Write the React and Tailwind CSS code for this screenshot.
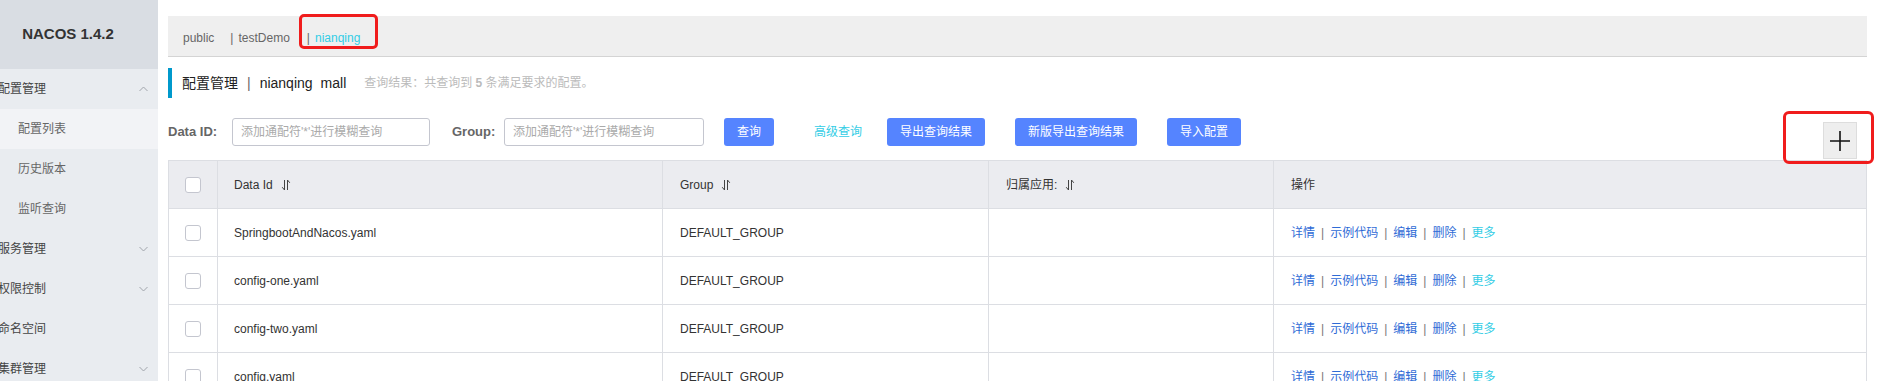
import React from 'react';

const SortIcon = () => (
  <svg width="10" height="12" viewBox="0 0 10 12" fill="none" stroke="#444" strokeWidth="1">
    <path d="M3.5 1v10M1.2 8.2l2.3 2.8" />
    <path d="M6.5 11V1M6.5 1l2.3 2.8" />
  </svg>
);

const Chevron = ({ up }) => (
  <svg width="9" height="6" viewBox="0 0 9 6" fill="none" stroke="#a0a4ab" strokeWidth="1">
    {up ? <path d="M0.5 5l4-4 4 4" /> : <path d="M0.5 1l4 4 4-4" />}
  </svg>
);

const Checkbox = () => <span className="block w-4 h-4 rounded-[3px] border border-[#c4c6cf] bg-white" />;

const menu = [
  { label: '配置管理', level: 0, chevron: 'up' },
  { label: '配置列表', level: 1, active: true },
  { label: '历史版本', level: 1 },
  { label: '监听查询', level: 1 },
  { label: '服务管理', level: 0, chevron: 'down' },
  { label: '权限控制', level: 0, chevron: 'down' },
  { label: '命名空间', level: 0 },
  { label: '集群管理', level: 0, chevron: 'down' },
];

const rows = ['SpringbootAndNacos.yaml', 'config-one.yaml', 'config-two.yaml', 'config.yaml'];

const Ops = () => (
  <div className="flex items-center">
    <a className="text-[#2f6bd6]">详情</a>
    <span className="mx-[6px] text-[#777]">|</span>
    <a className="text-[#2f6bd6]">示例代码</a>
    <span className="mx-[6px] text-[#777]">|</span>
    <a className="text-[#2f6bd6]">编辑</a>
    <span className="mx-[6px] text-[#777]">|</span>
    <a className="text-[#2f6bd6]">删除</a>
    <span className="mx-[6px] text-[#777]">|</span>
    <a className="text-[#33cde5]">更多</a>
  </div>
);

export default function App() {
  return (
    <div className="flex h-[381px] w-full overflow-hidden bg-white text-[12px] text-[#333] font-['Liberation_Sans','Noto_Sans_CJK_SC',sans-serif]">
      {/* sidebar, left 22px cut off in the shot */}
      <aside className="w-[158px] shrink-0 overflow-hidden bg-[#e9ecf0]">
        <div className="w-[180px] -ml-[22px]">
          <div className="h-[69px] bg-[#d9dde3] flex items-center justify-center text-[15px] font-bold text-[#333]">
            NACOS 1.4.2
          </div>
          {menu.map((m) => (
            <div
              key={m.label}
              className={`h-[40px] flex items-center justify-between pr-[10px] ${m.level ? 'pl-[40px] text-[#666]' : 'pl-[20px] text-[#444]'} ${m.active ? 'bg-[#f2f3f6]' : ''}`}
            >
              <span>{m.label}</span>
              {m.chevron && <Chevron up={m.chevron === 'up'} />}
            </div>
          ))}
        </div>
      </aside>

      <main className="flex-1 min-w-0 pl-[10px] pr-[11px] pt-[16px]">
        {/* namespace bar */}
        <div className="h-[41px] bg-[#efefef] border-b border-[#d4d4d4] flex items-center pt-[3px] pl-[15px] text-[#666]">
          <span>public</span>
          <span className="ml-[16px] mr-[5px]">|</span>
          <span>testDemo</span>
          <span className="ml-[17px] mr-[5px]">|</span>
          <span className="relative text-[#33cde5]">
            nianqing
            <span className="absolute -left-[16px] -top-[15px] w-[79px] h-[35px] border-[3px] border-[#f01c1c] rounded-[5px]" />
          </span>
        </div>

        {/* title */}
        <div className="mt-[11px] h-[30px] border-l-4 border-[#0099cc] pl-[10px] flex items-center">
          <span className="text-[14px] text-[#222]">配置管理</span>
          <span className="text-[14px] mx-[9px] text-[#666]">|</span>
          <span className="text-[14px] text-[#222]">nianqing</span>
          <span className="text-[14px] text-[#222] ml-[8px]">mall</span>
          <span className="ml-[18px] text-[#bbb]">
            查询结果：共查询到 <strong className="font-bold">5</strong> 条满足要求的配置。
          </span>
        </div>

        {/* search row */}
        <div className="mt-[20px] flex items-start">
          <label className="w-[64px] h-[28px] flex items-center text-[13px] font-bold text-[#666]">Data ID:</label>
          <input
            className="w-[198px] h-[28px] border border-[#c4c6cf] rounded-[3px] px-[8px] outline-none placeholder:text-[#aaa]"
            placeholder="添加通配符'*'进行模糊查询"
          />
          <label className="ml-[22px] w-[52px] h-[28px] flex items-center text-[13px] font-bold text-[#666]">Group:</label>
          <input
            className="w-[200px] h-[28px] border border-[#c4c6cf] rounded-[3px] px-[8px] outline-none placeholder:text-[#aaa]"
            placeholder="添加通配符'*'进行模糊查询"
          />
          <button className="ml-[20px] h-[28px] px-[13px] rounded-[3px] bg-[#5584ff] text-white">查询</button>
          <button className="ml-[40px] h-[28px] text-[#33cde5]">高级查询</button>
          <button className="ml-[25px] h-[28px] px-[13px] rounded-[3px] bg-[#5584ff] text-white">导出查询结果</button>
          <button className="ml-[30px] h-[28px] px-[13px] rounded-[3px] bg-[#5584ff] text-white">新版导出查询结果</button>
          <button className="ml-[30px] h-[28px] px-[13px] rounded-[3px] bg-[#5584ff] text-white">导入配置</button>
          <div className="relative ml-auto mr-[10px] mt-[4px]">
            <button className="w-[34px] h-[37px] bg-[#eeeeee] border border-[#dddddd] flex items-center justify-center">
              <svg width="20" height="20" viewBox="0 0 20 20" stroke="#111" strokeWidth="1.6">
                <path d="M0 10h20M10 0v20" />
              </svg>
            </button>
            <span className="absolute -left-[40px] -top-[11px] w-[91px] h-[53px] border-[3px] border-[#f01c1c] rounded-[6px]" />
          </div>
        </div>

        {/* table */}
        <div className="mt-[1px] border border-[#dcdee3]">
          <div className="grid grid-cols-[49px_445px_326px_285px_1fr] h-[48px] bg-[#ebecf0] border-b border-[#dcdee3]">
            <div className="border-r border-[#dcdee3] flex items-center justify-center"><Checkbox /></div>
            <div className="border-r border-[#dcdee3] flex items-center gap-[8px] pl-[16px]">Data Id <SortIcon /></div>
            <div className="border-r border-[#dcdee3] flex items-center gap-[8px] pl-[17px]">Group <SortIcon /></div>
            <div className="border-r border-[#dcdee3] flex items-center gap-[8px] pl-[17px]">归属应用: <SortIcon /></div>
            <div className="flex items-center pl-[17px]">操作</div>
          </div>
          {rows.map((r) => (
            <div key={r} className="grid grid-cols-[49px_445px_326px_285px_1fr] h-[48px] border-b border-[#dcdee3]">
              <div className="border-r border-[#dcdee3] flex items-center justify-center"><Checkbox /></div>
              <div className="border-r border-[#dcdee3] flex items-center pl-[16px]">{r}</div>
              <div className="border-r border-[#dcdee3] flex items-center pl-[17px]">DEFAULT_GROUP</div>
              <div className="border-r border-[#dcdee3]" />
              <div className="flex items-center pl-[17px]"><Ops /></div>
            </div>
          ))}
        </div>
      </main>
    </div>
  );
}
